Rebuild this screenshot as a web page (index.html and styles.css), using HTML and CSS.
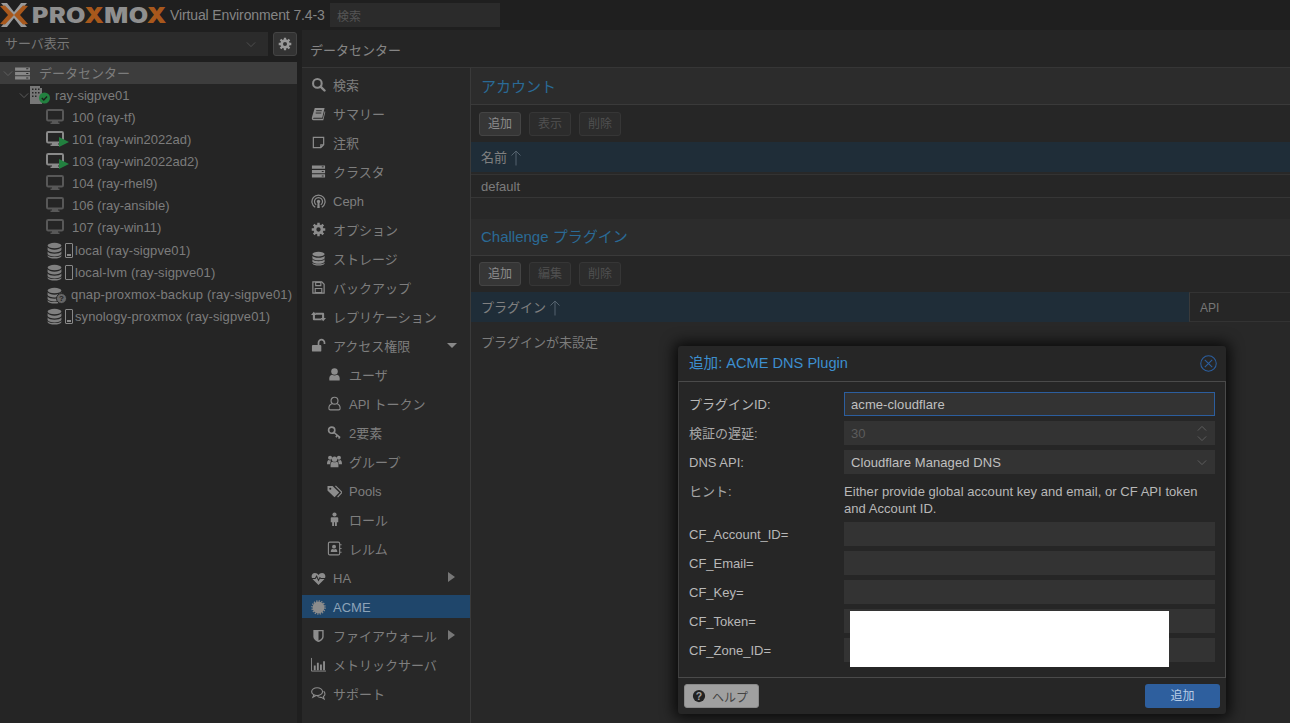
FILE: index.html
```html
<!DOCTYPE html>
<html lang="ja">
<head>
    <meta charset="UTF-8">
    <meta name="viewport" content="width=device-width, initial-scale=1.0">
    <title>ray-sigpve01 - Proxmox Virtual Environment</title>
    <link rel="stylesheet" href="styles.css">
</head>
<body>
    <!-- Iconos -->
    <svg class="sprite" xmlns="http://www.w3.org/2000/svg">
        <symbol id="i-search" viewBox="0 0 16 16"><circle cx="6.8" cy="6.8" r="4.6" fill="none" stroke="currentColor" stroke-width="2.2"/><path d="M10.2 10.2l4.2 4.2" stroke="currentColor" stroke-width="2.6" stroke-linecap="round"/></symbol>
        <symbol id="i-book" viewBox="0 0 16 16"><path d="M4 2h10.5l-2.5 10.5H3c-.8 0-1 .9-.4 1.2h10l2-8.2.7.6-2.2 9H2.6C1 15.100.6 13.500 1 12z" fill="currentColor"/><path d="M5.500 5h6M5 7.500h6" stroke="#282828" stroke-width="1"/></symbol>
        <symbol id="i-note" viewBox="0 0 16 16"><path d="M2.500 2.500h11v8l-3 3h-8zM13.500 10.500h-3v3" fill="none" stroke="currentColor" stroke-width="1.300"/></symbol>
        <symbol id="i-server" viewBox="0 0 16 16" preserveAspectRatio="none"><path d="M1 1.500h14v3.500H1zM1 6.300h14v3.500H1zM1 11h14v3.500H1z" fill="currentColor"/><path d="M11.500 3h2M11.500 8h2M11.500 12.800h2" stroke="#282828" stroke-width="1"/></symbol>
        <symbol id="i-ceph" viewBox="0 0 16 16"><g fill="none" stroke="currentColor" stroke-width="1.300"><path d="M4.500 14.200a7 7 0 1 1 7 0"/><path d="M5.500 11.600a4.300 4.300 0 1 1 5 0"/></g><circle cx="8" cy="8" r="1.800" fill="currentColor"/><path d="M7 9h2l.3 6H6.700z" fill="currentColor"/></symbol>
        <symbol id="i-gear" viewBox="0 0 16 16"><circle cx="8" cy="8" r="3.800" fill="none" stroke="currentColor" stroke-width="3"/><g fill="none" stroke="currentColor" stroke-width="2.600"><path d="M8 .8v3M8 12.200v3M.8 8h3M12.200 8h3M2.900 2.900L5 5M11 11l2.100 2.100M13.100 2.900L11 5M5 11l-2.100 2.100"/></g></symbol>
        <symbol id="i-db" viewBox="0 0 16 16"><g fill="currentColor"><ellipse cx="8" cy="3.300" rx="6.500" ry="2.500"/><path d="M1.500 5c1 1.600 3.500 2.200 6.500 2.200s5.500-.6 6.500-2.200v2.600C14 9 11 9.800 8 9.800S2 9 1.500 7.600zM1.500 8.900c1 1.500 3.500 2.100 6.500 2.100s5.500-.6 6.500-2.100v2.500c-.5 1.400-3.500 2.200-6.500 2.200s-6-.8-6.500-2.200z"/><path d="M1.500 12.500c1 1.200 3.500 1.700 6.500 1.700s5.500-.5 6.500-1.700v.8C14 14.700 11 15.500 8 15.500s-6-.8-6.500-2.200z"/></g></symbol>
        <symbol id="i-floppy" viewBox="0 0 16 16"><path d="M2 2h9.500L14 4.500V14H2z" fill="none" stroke="currentColor" stroke-width="1.300"/><path d="M5 2.500h5.500v3.500H5zM4.500 9h7v4.500h-7z" fill="none" stroke="currentColor" stroke-width="1.200"/></symbol>
        <symbol id="i-retweet" viewBox="0 0 16 16"><path d="M3 3l3 3.500H4.200V10H10l1.800 2H3a1 1 0 0 1-1-1V6.500H0zM13 13l-3-3.500h1.800V6H6L4.200 4H13a1 1 0 0 1 1 1v4.500h2z" fill="currentColor"/></symbol>
        <symbol id="i-unlock" viewBox="0 0 16 16"><rect x="1" y="7.500" width="10" height="7" rx="1" fill="currentColor"/><path d="M8 7.500V5a3.200 3.200 0 0 1 6.400 0v1.500" fill="none" stroke="currentColor" stroke-width="1.800"/></symbol>
        <symbol id="i-user" viewBox="0 0 16 16"><circle cx="8" cy="4.800" r="3.500" fill="currentColor"/><path d="M2.500 14.500c-.6-4 1-6 2.800-6.200 1.800 1.100 3.600 1.100 5.400 0 1.800.2 3.400 2.200 2.800 6.200z" fill="currentColor"/></symbol>
        <symbol id="i-user-o" viewBox="0 0 16 16"><circle cx="8" cy="5" r="3.700" fill="none" stroke="currentColor" stroke-width="1.200"/><path d="M5.300 8.200C3 9 2 10.500 2 13c0 1 .6 1.800 1.500 1.800h9c.9 0 1.500-.8 1.500-1.800 0-2.500-1-4-3.300-4.800" fill="none" stroke="currentColor" stroke-width="1.200"/></symbol>
        <symbol id="i-key" viewBox="0 0 16 16"><circle cx="5" cy="5.500" r="3.300" fill="none" stroke="currentColor" stroke-width="1.800"/><path d="M7.500 8l6.500 5.500M11 11l-1.500 2M13.500 13l-1.200 1.500" fill="none" stroke="currentColor" stroke-width="1.700"/></symbol>
        <symbol id="i-users" viewBox="0 0 16 16"><g fill="currentColor"><circle cx="3.300" cy="4" r="2.200"/><circle cx="12.700" cy="4" r="2.200"/><circle cx="8" cy="5.500" r="2.800"/><path d="M0 11c0-3 1-4.500 2-4.500 1 .6 1.500.6 2.500.5C3.800 8 3.500 9.500 3.500 11zM16 11c0-3-1-4.500-2-4.500-1 .6-1.500.6-2.500.5.700 1 1 2.500 1 4z"/><path d="M3.800 14c-.3-4 .7-5.800 2-5.800 1.500.9 3 .9 4.400 0 1.300 0 2.300 1.800 2 5.800z"/></g></symbol>
        <symbol id="i-tags" viewBox="0 0 16 16"><path d="M.5 2h5.500l7 7-5 5-7.500-7z" fill="currentColor"/><path d="M9 2l7 7-4.700 5" fill="none" stroke="currentColor" stroke-width="1.300"/><circle cx="3.500" cy="5" r="1.100" fill="#282828"/></symbol>
        <symbol id="i-male" viewBox="0 0 16 16"><circle cx="8" cy="2.700" r="2.200" fill="currentColor"/><path d="M5 5.500h6c.6 0 1 .4 1 1v4.300h-1.500V15H8.500v-4h-1v4H5.500v-4.200H4V6.500c0-.6.4-1 1-1z" fill="currentColor"/></symbol>
        <symbol id="i-addr" viewBox="0 0 16 16"><rect x="1.500" y="1.200" width="12" height="13.600" rx="1.500" fill="none" stroke="currentColor" stroke-width="1.200"/><circle cx="7.500" cy="6" r="2.100" fill="currentColor"/><path d="M4 11.800c0-2.300.8-3.300 1.800-3.300 1.100.6 2.300.6 3.400 0 1 0 1.800 1 1.800 3.300z" fill="currentColor"/><path d="M14 4h1.500M14 8h1.500M14 12h1.500" stroke="currentColor" stroke-width="1.200"/></symbol>
        <symbol id="i-heart" viewBox="0 0 16 16"><path d="M8 15L1.800 8.700C-.4 6.200.6 2 4.200 2 6 2 7.200 3 8 4.200 8.800 3 10 2 11.800 2c3.600 0 4.600 4.200 2.400 6.700z" fill="currentColor"/><path d="M0 8h4.500l1.500-2.500 2 4.500 1.500-3 1 1H16" fill="none" stroke="#282828" stroke-width="1.100"/></symbol>
        <symbol id="i-cert" viewBox="0 0 16 16"><circle cx="8" cy="8" r="6.300" fill="currentColor"/><circle cx="8" cy="8" r="7" fill="none" stroke="currentColor" stroke-width="1.400" stroke-dasharray="1.400 1.350"/></symbol>
        <symbol id="i-shield" viewBox="0 0 16 16"><path d="M2.500 2h11v7c0 3-3 5-5.500 6-2.500-1-5.500-3-5.500-6z" fill="currentColor"/><path d="M8 3.500h4v5.500c0 2-2 3.500-4 4.300z" fill="#282828"/></symbol>
        <symbol id="i-chart" viewBox="0 0 16 16"><path d="M.5 1v14h15.500" fill="none" stroke="currentColor" stroke-width="1"/><path d="M3 9h2v5H3zM6.300 6h2v8h-2zM9.600 8h2v6h-2zM12.900 4.500h2V14h-2z" fill="currentColor"/></symbol>
        <symbol id="i-comments" viewBox="0 0 16 16"><ellipse cx="6.500" cy="6" rx="5.800" ry="4.200" fill="none" stroke="currentColor" stroke-width="1.200"/><path d="M3 9.500L2 12l3-1.700M13.500 5.500c1.800 1.800 2 4.300-.3 5.800l.8 2.500-3-1.700c-1.500.2-3-.2-4-1" fill="none" stroke="currentColor" stroke-width="1.200"/></symbol>
        <symbol id="i-monitor" viewBox="0 0 18 16"><rect x="1" y="1" width="16" height="10.500" rx="1.200" fill="none" stroke="currentColor" stroke-width="2"/><path d="M6 12h6v1.500h1.500V15h-9v-1.500H6z" fill="currentColor"/></symbol>
        <symbol id="i-chev" viewBox="0 0 12 8"><path d="M1 1.500l5 5 5-5" fill="none" stroke="currentColor" stroke-width="1"/></symbol>
        <symbol id="i-up" viewBox="0 0 10 16"><path d="M5 15.500V1M.5 5.500L5 1l4.500 4.500" fill="none" stroke="currentColor" stroke-width="1"/></symbol>
    </svg>

    <header class="topbar">
        <div class="logo">
            <svg class="logo-mark" viewBox="0 0 28 26"><path d="M1 1h6l7 9 7-9h6L17 13l10 12h-6l-7-9-7 9H1l10-12z" fill="#9a9a9a"/><path d="M0 4l5-.4L14 13 5 22.400 0 22l8-9zM28 4l-5-.4L14 13l9 9.400 5-.4-8-9z" fill="#a8581c"/></svg>
            <span class="logo-text">PRO<b>X</b>MO<b>X</b></span>
        </div>
        <span class="version">Virtual Environment 7.4-3</span>
        <div class="top-search">検索</div>
    </header>

    <div class="layout">
        <aside class="sidebar">
            <div class="view-bar">
                <div class="view-select"><span class="select-text">サーバ表示</span><svg class="chev"><use href="#i-chev"/></svg></div>
                <div class="gear-btn"><svg class="ico"><use href="#i-gear"/></svg></div>
            </div>
            <div class="tree">
                <div class="tree-row sel lvl0"><svg class="chev tw"><use href="#i-chev"/></svg><svg class="ico-dc"><use href="#i-server"/></svg><span class="cjk">データセンター</span></div>
                <div class="tree-row lvl1">
                    <svg class="chev tw"><use href="#i-chev"/></svg>
                    <svg class="ico-node" viewBox="0 0 20 18"><path d="M0 0h10v2h2v16H0z" fill="#777"/><path d="M2 2.500h1.500V4H2zM5 2.500h1.500V4H5zM8 2.500h1.500V4H8zM2 6h1.500v1.500H2zM5 6h1.500v1.500H5zM8 6h1.500v1.500H8zM2 9.500h1.500V11H2zM5 9.500h1.500V11H5z" fill="#262626"/><circle cx="14.500" cy="12" r="5.500" fill="#22803f"/><path d="M11.800 12l2 2 3.200-3.500" fill="none" stroke="#1d1d1d" stroke-width="1.400"/></svg>
                    <span>ray-sigpve01</span>
                </div>
                <div class="tree-row lvl2"><svg class="ico-vm"><use href="#i-monitor"/></svg><span>100 (ray-tf)</span></div>
                <div class="tree-row lvl2"><span class="vm-wrap"><svg class="ico-vm on"><use href="#i-monitor"/></svg><svg class="play" viewBox="0 0 10 10"><path d="M0 0l10 5-10 5z" fill="#22803f"/></svg></span><span>101 (ray-win2022ad)</span></div>
                <div class="tree-row lvl2"><span class="vm-wrap"><svg class="ico-vm on"><use href="#i-monitor"/></svg><svg class="play" viewBox="0 0 10 10"><path d="M0 0l10 5-10 5z" fill="#22803f"/></svg></span><span>103 (ray-win2022ad2)</span></div>
                <div class="tree-row lvl2"><svg class="ico-vm"><use href="#i-monitor"/></svg><span>104 (ray-rhel9)</span></div>
                <div class="tree-row lvl2"><svg class="ico-vm"><use href="#i-monitor"/></svg><span>106 (ray-ansible)</span></div>
                <div class="tree-row lvl2"><svg class="ico-vm"><use href="#i-monitor"/></svg><span>107 (ray-win11)</span></div>
                <div class="tree-row lvl2 store"><svg class="ico-db"><use href="#i-db"/></svg><span class="gauge low"></span><span>local (ray-sigpve01)</span></div>
                <div class="tree-row lvl2 store"><svg class="ico-db"><use href="#i-db"/></svg><span class="gauge"></span><span>local-lvm (ray-sigpve01)</span></div>
                <div class="tree-row lvl2 store-q"><span class="db-wrap"><svg class="ico-db"><use href="#i-db"/></svg><i class="q">?</i></span><span>qnap-proxmox-backup (ray-sigpve01)</span></div>
                <div class="tree-row lvl2 store"><svg class="ico-db"><use href="#i-db"/></svg><span class="gauge low"></span><span>synology-proxmox (ray-sigpve01)</span></div>
            </div>
        </aside>

        <main class="main">
            <div class="crumb">データセンター</div>
            <div class="main-body">
                <nav class="nav">
                    <a class="nav-item"><svg class="nav-ico"><use href="#i-search"/></svg>検索</a>
                    <a class="nav-item"><svg class="nav-ico"><use href="#i-book"/></svg>サマリー</a>
                    <a class="nav-item"><svg class="nav-ico"><use href="#i-note"/></svg>注釈</a>
                    <a class="nav-item"><svg class="nav-ico"><use href="#i-server"/></svg>クラスタ</a>
                    <a class="nav-item lat"><svg class="nav-ico"><use href="#i-ceph"/></svg>Ceph</a>
                    <a class="nav-item"><svg class="nav-ico"><use href="#i-gear"/></svg>オプション</a>
                    <a class="nav-item"><svg class="nav-ico"><use href="#i-db"/></svg>ストレージ</a>
                    <a class="nav-item"><svg class="nav-ico"><use href="#i-floppy"/></svg>バックアップ</a>
                    <a class="nav-item"><svg class="nav-ico"><use href="#i-retweet"/></svg>レプリケーション</a>
                    <a class="nav-item"><svg class="nav-ico"><use href="#i-unlock"/></svg>アクセス権限<i class="caret-down"></i></a>
                    <a class="nav-item sub"><svg class="nav-ico"><use href="#i-user"/></svg>ユーザ</a>
                    <a class="nav-item sub"><svg class="nav-ico"><use href="#i-user-o"/></svg>API トークン</a>
                    <a class="nav-item sub"><svg class="nav-ico"><use href="#i-key"/></svg>2要素</a>
                    <a class="nav-item sub"><svg class="nav-ico"><use href="#i-users"/></svg>グループ</a>
                    <a class="nav-item sub lat"><svg class="nav-ico"><use href="#i-tags"/></svg>Pools</a>
                    <a class="nav-item sub"><svg class="nav-ico"><use href="#i-male"/></svg>ロール</a>
                    <a class="nav-item sub"><svg class="nav-ico"><use href="#i-addr"/></svg>レルム</a>
                    <a class="nav-item lat"><svg class="nav-ico"><use href="#i-heart"/></svg>HA<i class="caret-right"></i></a>
                    <a class="nav-item active lat"><svg class="nav-ico"><use href="#i-cert"/></svg>ACME</a>
                    <a class="nav-item"><svg class="nav-ico"><use href="#i-shield"/></svg>ファイアウォール<i class="caret-right"></i></a>
                    <a class="nav-item"><svg class="nav-ico"><use href="#i-chart"/></svg>メトリックサーバ</a>
                    <a class="nav-item"><svg class="nav-ico"><use href="#i-comments"/></svg>サポート</a>
                </nav>

                <section class="content">
                    <div class="panel">
                        <h2 class="panel-title">アカウント</h2>
                        <div class="toolbar">
                            <span class="btn">追加</span>
                            <span class="btn off">表示</span>
                            <span class="btn off">削除</span>
                        </div>
                        <div class="grid-head"><div class="col">名前<svg class="arrow"><use href="#i-up"/></svg></div></div>
                        <div class="grid-row">default</div>
                    </div>
                    <div class="panel">
                        <h2 class="panel-title second">Challenge プラグイン</h2>
                        <div class="toolbar short">
                            <span class="btn">追加</span>
                            <span class="btn off">編集</span>
                            <span class="btn off">削除</span>
                        </div>
                        <div class="grid-head"><div class="col">プラグイン<svg class="arrow"><use href="#i-up"/></svg></div><div class="col-api">API</div></div>
                        <div class="grid-empty">プラグインが未設定</div>
                    </div>
                </section>
            </div>
        </main>
    </div>

    <div class="dialog">
        <div class="dialog-title">
            <span class="title-text">追加: ACME DNS Plugin</span>
            <svg class="close" viewBox="0 0 16 16"><circle cx="8" cy="8" r="7.300" fill="none" stroke="#2c5e9e" stroke-width="1"/><path d="M4.500 4.500l7 7M11.500 4.500l-7 7" stroke="#2c5e9e" stroke-width="1"/></svg>
        </div>
        <div class="dialog-body">
            <div class="form-row"><label class="cjk">プラグインID:</label><div class="field focus">acme-cloudflare</div></div>
            <div class="form-row"><label class="dim cjk">検証の遅延:</label><div class="field off">30<span class="spin"><svg class="chev flip"><use href="#i-chev"/></svg><svg class="chev"><use href="#i-chev"/></svg></span></div></div>
            <div class="form-row"><label>DNS API:</label><div class="field">Cloudflare Managed DNS<svg class="chev end"><use href="#i-chev"/></svg></div></div>
            <div class="form-row hint"><label class="dim hint-label">ヒント:</label><p>Either provide global account key and email, or CF API token and Account ID.</p></div>
            <div class="form-row"><label>CF_Account_ID=</label><div class="field"></div></div>
            <div class="form-row"><label>CF_Email=</label><div class="field"></div></div>
            <div class="form-row"><label>CF_Key=</label><div class="field"></div></div>
            <div class="form-row"><label>CF_Token=</label><div class="field"></div></div>
            <div class="form-row"><label>CF_Zone_ID=</label><div class="field"></div></div>
        </div>
        <div class="dialog-foot">
            <span class="help-btn"><svg class="help-ico" viewBox="0 0 16 16"><circle cx="8" cy="8" r="7" fill="#222"/><text x="8" y="12.500" text-anchor="middle" class="help-q">?</text></svg>ヘルプ</span>
            <span class="add-btn">追加</span>
        </div>
        <div class="redacted"></div>
    </div>
</body>
</html>
```

FILE: styles.css
```css
* {
    box-sizing: border-box;
}
html, body {
    height: 100%;
}
body {
    margin: 0;
    overflow: hidden;
    position: relative;
    background-color: #1f1f1f;
    color: #808080;
    font-family: "Liberation Sans", "Noto Sans CJK JP", sans-serif;
    font-size: 13px;
}
.sprite {
    display: none;
}

/* barra superior */
.topbar {
    height: 30px;
    display: flex;
    align-items: center;
    background-color: #1f1f1f;
}
.logo {
    width: 170px;
    height: 30px;
    display: flex;
    align-items: center;
    flex-shrink: 0;
}
.logo-mark {
    width: 28px;
    height: 26px;
    flex-shrink: 0;
}
.logo-text {
    margin-left: 4px;
    font-family: "Inter", "Liberation Sans", sans-serif;
    font-size: 21px;
    font-weight: 900;
    letter-spacing: 0.4px;
    color: #8f8f8f;
    transform: scaleX(1.19);
    transform-origin: left center;
}
.logo-text b {
    color: #a8581c;
    font-weight: 900;
}
.version {
    width: 160px;
    font-size: 14px;
    letter-spacing: -0.12px;
    color: #858585;
    white-space: nowrap;
}
.top-search {
    width: 170px;
    height: 24px;
    padding: 4px 7px;
    background-color: #2b2b2b;
    color: #555;
    font-size: 12px;
}

.layout {
    display: flex;
    height: 693px;
}

/* panel izquierdo */
.sidebar {
    width: 302px;
    flex-shrink: 0;
    padding-right: 5px;
}
.view-bar {
    display: flex;
    justify-content: space-between;
    padding-top: 2px;
    height: 32px;
}
.view-select {
    width: 268px;
    height: 24px;
    padding: 0 5px;
    display: flex;
    justify-content: space-between;
    align-items: center;
    background-color: #2b2b2b;
    color: #777;
}
.select-text {
    margin-bottom: 3px;
}
.view-select .chev {
    margin-right: 7px;
    color: #555;
}
.gear-btn {
    width: 24px;
    height: 24px;
    display: flex;
    align-items: center;
    justify-content: center;
    background-color: #333;
    border: 1px solid #444;
    border-radius: 3px;
    color: #999;
}
.ico {
    width: 14px;
    height: 14px;
}
.chev {
    width: 10px;
    height: 7px;
    color: #666;
    flex-shrink: 0;
}
.tree {
    height: 661px;
    background-color: #252525;
}
.tree-row {
    height: 22px;
    display: flex;
    align-items: center;
    white-space: nowrap;
    color: #7c7c7c;
}
.tree-row:nth-child(n+9) {
    margin-top: 0.3px;
}
.tree-row:nth-child(9) {
    margin-top: 1px;
}
.tree-row.sel {
    background-color: #3d3d3d;
}
.cjk {
    margin-bottom: 2px;
}
.lvl0 {
    padding-left: 3px;
}
.lvl0 .ico-dc {
    width: 17px;
    height: 15px;
    margin-left: 1px;
    margin-right: 8px;
    color: #888;
}
.lvl1 {
    padding-left: 19px;
}
.ico-node {
    width: 20px;
    height: 18px;
    margin-left: 1px;
    margin-right: 5px;
}
.lvl2 {
    padding-left: 46px;
}
.ico-vm {
    width: 18px;
    height: 16px;
    margin-right: 8px;
    color: #585858;
}
.ico-vm.on {
    color: #8a8a8a;
    margin-right: 0;
}
.vm-wrap {
    position: relative;
    width: 18px;
    height: 16px;
    margin-right: 8px;
}
.play {
    position: absolute;
    left: 13px;
    top: 6px;
    width: 10px;
    height: 10px;
}
.ico-db {
    width: 17px;
    height: 17px;
    color: #808080;
    flex-shrink: 0;
}
.store {
    padding-left: 46px;
    letter-spacing: 0.1px;
}
.store .gauge {
    width: 8px;
    height: 15px;
    margin: 0 2px 0 2px;
    border: 1px solid #888;
    border-radius: 1px;
    position: relative;
}
.gauge.low::after {
    content: "";
    position: absolute;
    left: 1px;
    right: 1px;
    bottom: 1px;
    height: 2px;
    background-color: #888;
}
.store-q {
    padding-left: 46px;
    letter-spacing: 0.15px;
}
.db-wrap {
    position: relative;
    width: 20px;
    height: 16px;
    margin-right: 5px;
}
.q {
    position: absolute;
    left: 10px;
    top: 6px;
    width: 11px;
    height: 11px;
    border-radius: 50%;
    background-color: #666;
    border: 1px solid #252525;
    color: #222;
    font-size: 8px;
    font-style: normal;
    font-weight: bold;
    line-height: 9px;
    text-align: center;
}

/* area principal */
.main {
    flex: 1;
    min-width: 0;
    background-color: #282828;
}
.crumb {
    height: 38px;
    padding: 10px 8px 0;
    color: #858585;
    background-color: #252525;
    border-bottom: 1px solid #363636;
}
.main-body {
    display: flex;
    height: 655px;
}
.nav {
    width: 169px;
    flex-shrink: 0;
    padding-top: 5px;
    display: flex;
    flex-direction: column;
    gap: 6px;
    border-right: 1px solid #3a3a3a;
}
.nav-item {
    height: 23px;
    flex-shrink: 0;
    display: flex;
    align-items: center;
    padding-left: 9px;
    color: #7e7e7e;
    position: relative;
}
.nav-item.sub {
    padding-left: 25px;
}
.nav-item.lat {
    padding-top: 2px;
}
.nav-item.active {
    background-color: #1f466b;
    color: #8da3b8;
}
.nav-ico {
    width: 15px;
    height: 15px;
    margin-right: 7px;
    color: #8c8c8c;
    flex-shrink: 0;
}
.caret-down {
    position: absolute;
    right: 13px;
    top: 9px;
    border: 5px solid transparent;
    border-top: 5px solid #888;
    border-bottom: 0;
}
.caret-right {
    position: absolute;
    right: 15px;
    top: 6px;
    border: 5px solid transparent;
    border-left: 7px solid #777;
    border-right: 0;
}

/* paneles */
.content {
    flex: 1;
    min-width: 0;
}
.panel-title {
    height: 37px;
    margin: 0;
    padding: 7px 10px 0;
    background-color: #2c2c2c;
    border-bottom: 1px solid #3a3a3a;
    color: #2a6a96;
    font-size: 15px;
    font-weight: normal;
}
.panel-title.second {
    padding-top: 6px;
}
.toolbar {
    height: 37px;
    padding: 7px 8px 0;
    display: flex;
    gap: 8px;
    background-color: #262626;
}
.toolbar.short {
    height: 36px;
    padding-top: 6px;
}
.btn {
    width: 42px;
    height: 24px;
    line-height: 22px;
    text-align: center;
    font-size: 12px;
    color: #8c8c8c;
    background-color: #363636;
    border: 1px solid #444;
    border-radius: 3px;
}
.btn.off {
    color: #505050;
    background-color: #2c2c2c;
    border-color: #363636;
}
.grid-head {
    height: 30px;
    display: flex;
    background-color: #1f2d38;
}
.col {
    flex: 1;
    padding: 5px 10px 0;
    color: #808080;
    display: flex;
    align-items: flex-start;
}
.arrow {
    width: 10px;
    height: 16px;
    margin: 3px 0 0 4px;
    color: #55636e;
}
.col-api {
    width: 101px;
    padding: 8px 10px 0;
    background-color: #262626;
    border-left: 1px solid #3a3a3a;
    border-top: 1px solid #333;
    border-bottom: 1px solid #333;
    color: #777;
    font-size: 12px;
}
.grid-row {
    height: 24px;
    margin-top: 2px;
    padding: 4px 10px 0;
    border-top: 1px solid #333;
    border-bottom: 1px solid #363636;
    margin-bottom: 21px;
    background-color: #262626;
    color: #7c7c7c;
}
.grid-empty {
    padding: 10px 10px;
    color: #7c7c7c;
}

/* ventana de dialogo */
.dialog {
    position: absolute;
    left: 678px;
    top: 346px;
    width: 548px;
    height: 368px;
    display: flex;
    flex-direction: column;
    background-color: #262626;
    border-radius: 3px;
    box-shadow: 0 0 14px 4px rgba(0, 0, 0, 0.75);
    color: #c0c0c0;
}
.dialog-title {
    height: 35px;
    padding: 0 9px 0 11px;
    display: flex;
    align-items: center;
    justify-content: space-between;
    color: #3d8fcf;
    font-size: 14.6px;
}
.title-text {
    margin-bottom: 5px;
}
.close {
    width: 17px;
    height: 17px;
}
.dialog-body {
    height: 297px;
    padding: 10px 10px 0;
    display: flex;
    flex-direction: column;
    gap: 5px;
    border-top: 1px solid #4a4a4a;
    border-bottom: 1px solid #4a4a4a;
    border-left: 1px solid #3f3f3f;
    border-right: 1px solid #4a4a4a;
}
.form-row {
    height: 24px;
    display: flex;
    align-items: center;
}
.form-row label {
    width: 155px;
    flex-shrink: 0;
    color: #b8b8b8;
}
.form-row label.dim {
    color: #a8a8a8;
}
.form-row label.hint-label {
    margin-top: -2px;
}
.field {
    width: 371px;
    height: 24px;
    padding: 0 7px;
    display: flex;
    align-items: center;
    justify-content: space-between;
    background-color: #333;
    color: #c0c0c0;
    letter-spacing: 0.08px;
}
.field.focus {
    border: 1px solid #2c5e9e;
    padding: 0 6px;
}
.field.off {
    color: #5c5c5c;
}
.field .end {
    margin-right: 1px;
}
.spin {
    display: flex;
    flex-direction: column;
    gap: 3px;
    margin-right: 1px;
}
.flip {
    transform: scaleY(-1);
}
.form-row.hint {
    height: 38px;
    align-items: flex-start;
    padding-top: 4px;
}
.hint p {
    width: 371px;
    margin: 0;
    line-height: 17px;
    font-size: 13px;
    letter-spacing: 0.05px;
    color: #b8b8b8;
}
.dialog-foot {
    flex: 1;
    padding: 0 6px;
    display: flex;
    align-items: center;
    justify-content: space-between;
}
.help-btn {
    width: 75px;
    height: 24px;
    padding-left: 7px;
    display: flex;
    align-items: center;
    gap: 6px;
    background-color: #a0a0a0;
    border: 1px solid #8a8a8a;
    border-radius: 3px;
    color: #444;
    font-size: 12px;
}
.help-ico {
    width: 14px;
    height: 14px;
}
.help-q {
    fill: #a0a0a0;
    font-size: 12px;
    font-weight: bold;
}
.add-btn {
    width: 75px;
    height: 24px;
    line-height: 24px;
    text-align: center;
    background-color: #2e5f9e;
    border-radius: 3px;
    color: #b8cde6;
    font-size: 12px;
}
.redacted {
    position: absolute;
    left: 172px;
    top: 265px;
    width: 319px;
    height: 56px;
    background-color: #fff;
}
```
